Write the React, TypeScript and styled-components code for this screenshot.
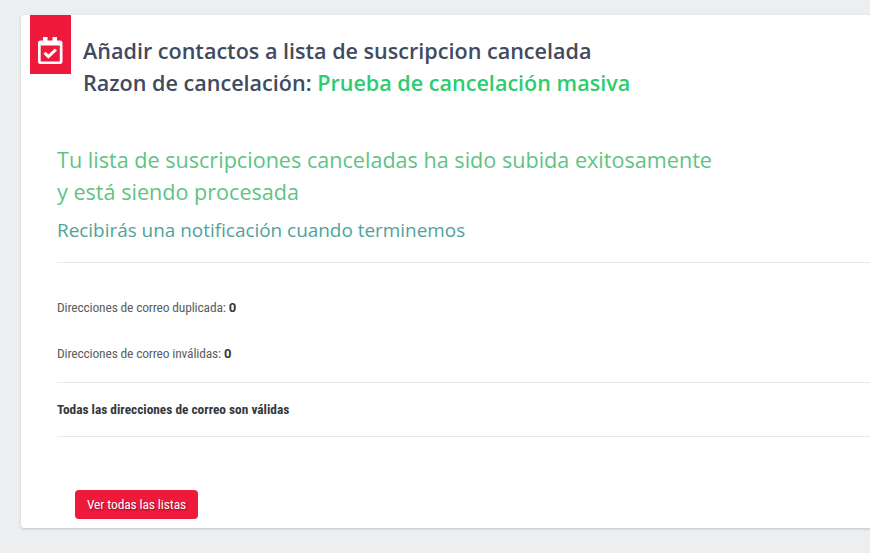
import React from "react";
import styled, { createGlobalStyle } from "styled-components";

const GlobalStyle = createGlobalStyle`
  * { box-sizing: border-box; }
  body {
    margin: 0;
    background: #edeef0;
    overflow: hidden;
    font-family: "Open Sans", sans-serif;
  }
`;

const Page = styled.main`
  height: 553px;
  padding: 15px 0 0 21px;
  overflow: hidden;
`;

const Card = styled.section`
  display: flex;
  flex-direction: column;
  width: 880px;
  height: 513px;
  background: #fff;
  border-radius: 3px;
  box-shadow: 0 1px 3px rgba(0, 0, 0, 0.18);
`;

const Header = styled.header`
  display: flex;
  height: 129px;
  padding-left: 9px;
`;

const IconTab = styled.div`
  display: flex;
  width: 41px;
  height: 59px;
  padding: 22px 0 0 8px;
  background: #ef1a3b;
`;

const Title = styled.h1`
  margin: 20px 0 0 12px;
  font-size: 21.57px;
  font-weight: 600;
  line-height: 32px;
  color: #414b5f;
  white-space: nowrap;
`;

const Reason = styled.span`
  color: #2ecc71;
`;

const Body = styled.div`
  padding-left: 36px;
`;

const Success = styled.h2`
  margin: 0;
  font-size: 21.6px;
  font-weight: 400;
  line-height: 32px;
  color: #5fc384;
  white-space: nowrap;
`;

const Notice = styled.h3`
  margin: 9px 0 0;
  font-size: 18.92px;
  font-weight: 400;
  line-height: 26px;
  color: #4fa39b;
  white-space: nowrap;
`;

const Row = styled.div<{ $height: number; $ruled?: boolean; $bold?: boolean }>`
  height: ${(p) => p.$height}px;
  border-bottom: ${(p) => (p.$ruled ? "1px solid #e6e8e9" : "none")};
  font-family: Roboto, sans-serif;
  font-size: ${(p) => (p.$bold ? 13.35 : 13.5)}px;
  font-stretch: 80%;
  font-weight: ${(p) => (p.$bold ? 700 : 400)};
  letter-spacing: ${(p) => (p.$bold ? 0 : -0.17)}px;
  line-height: ${(p) => p.$height - (p.$ruled ? 1 : 0)}px;
  color: ${(p) => (p.$bold ? "#34383c" : "#5a5e62")};
  white-space: pre;
`;

const Stats = styled.div`
  padding-top: 21px;
  border-top: 1px solid #e6e8e9;
  margin-top: 19px;
`;

const Count = styled.strong`
  font-size: 13px;
  font-stretch: 100%;
  font-weight: 700;
  color: #34383c;
`;

const Button = styled.button`
  display: flex;
  align-items: center;
  justify-content: center;
  width: 123px;
  height: 29px;
  margin: 53px 0 0 18px;
  padding: 0 0 2px;
  border: 0;
  border-radius: 4px;
  background: #ef1a3b;
  color: #fff;
  font: 400 13.5px Roboto, sans-serif;
  font-stretch: 80%;
  letter-spacing: -0.13px;
  text-shadow: 1px 1px 2px rgba(0, 0, 0, 0.45);
`;

const CalendarCheck = () => (
  <svg width="25" height="28" viewBox="0 0 25 28" fill="none">
    <path
      fill="#fff"
      fillRule="evenodd"
      d="M5 0H9.5V3.5H14.5V0H19V3.5H22Q24.5 3.5 24.5 6V24.5Q24.5 27 22 27H2.5Q0 27 0 24.5V6Q0 3.5 2.5 3.5H5ZM2.7 8.4V24.4H21.8V8.4Z"
    />
    <path d="m6.5 15.7 3.8 3.9L18 12.5" stroke="#fff" strokeWidth="3" />
  </svg>
);

export default function App() {
  return (
    <>
      <GlobalStyle />
      <Page>
        <Card>
          <Header>
            <IconTab>
              <CalendarCheck />
            </IconTab>
            <Title>
              Añadir contactos a lista de suscripcion cancelada
              <br />
              Razon de cancelación: <Reason>Prueba de cancelación masiva</Reason>
            </Title>
          </Header>
          <Body>
            <Success>
              Tu lista de suscripciones canceladas ha sido subida exitosamente
              <br />y está siendo procesada
            </Success>
            <Notice>Recibirás una notificación cuando terminemos</Notice>
            <Stats>
              <Row $height={46}>
                Direcciones de correo duplicada: <Count>0</Count>
              </Row>
              <Row $height={46}>
                Direcciones de correo inválidas: <Count>0</Count>
              </Row>
            </Stats>
            <Row $height={7} $ruled />
            <Row $height={54} $ruled $bold>
              Todas las direcciones de correo son válidas
            </Row>
            <Button type="button">Ver todas las listas</Button>
          </Body>
        </Card>
      </Page>
    </>
  );
}
